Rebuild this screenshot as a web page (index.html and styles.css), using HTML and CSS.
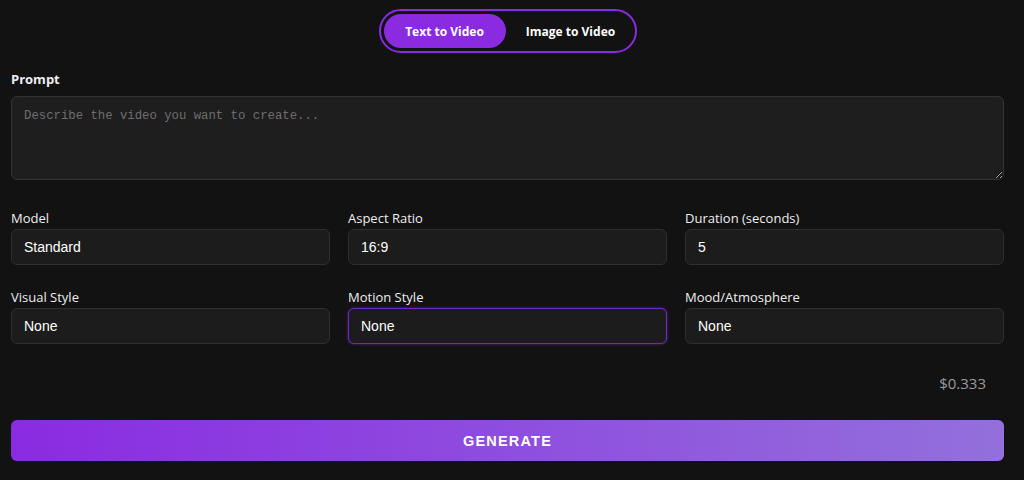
FILE: index.html
```html
<!DOCTYPE html>
<html lang="en">
<head>
  <meta charset="UTF-8">
  <meta name="viewport" content="width=device-width, initial-scale=1.0">
  <title>Video Generator</title>
  <link rel="stylesheet" href="styles.css">
</head>
<body>
  <div class="app">
    <div class="mode-row">
      <div class="mode-toggle">
        <button class="mode-btn active">Text to Video</button>
        <button class="mode-btn">Image to Video</button>
      </div>
    </div>

    <label class="prompt-label" for="prompt">Prompt</label>
    <textarea id="prompt" class="prompt" placeholder="Describe the video you want to create..."></textarea>

    <div class="options">
      <div class="field">
        <label>Model</label>
        <input type="text" value="Standard">
      </div>
      <div class="field">
        <label>Aspect Ratio</label>
        <input type="text" value="16:9">
      </div>
      <div class="field">
        <label>Duration (seconds)</label>
        <input type="text" value="5">
      </div>
      <div class="field">
        <label>Visual Style</label>
        <input type="text" value="None">
      </div>
      <div class="field">
        <label>Motion Style</label>
        <input type="text" class="focused" value="None">
      </div>
      <div class="field">
        <label>Mood/Atmosphere</label>
        <input type="text" value="None">
      </div>
    </div>

    <div class="price">$0.333</div>

    <button class="generate">GENERATE</button>
  </div>
</body>
</html>
```

FILE: styles.css
```css
body {
  margin: 0;
  padding: 0;
  background-color: #121212;
  color: #eee;
  font-family: 'Open Sans', 'Noto Sans', sans-serif;
}
.app {
  padding: 9px 20px 0 11px;
}
.mode-row {
  display: flex;
  justify-content: center;
}
.mode-toggle {
  display: inline-flex;
  padding: 3px;
  border: 2px solid #8a2be2;
  border-radius: 999px;
}
.mode-btn {
  height: 34px;
  padding: 0 0 0 4px;
  border: none;
  border-radius: 999px;
  background: transparent;
  color: #fff;
  font-family: 'Open Sans', sans-serif;
  font-size: 12px;
  font-weight: 700;
  cursor: pointer;
  width: 126px;
}
.mode-btn.active {
  width: 122px;
  padding: 0;
  background-color: #8a2be2;
}
.prompt-label {
  display: block;
  margin-top: 18px;
  font-size: 13px;
  font-weight: 700;
  line-height: 17px;
}
.prompt {
  display: block;
  box-sizing: border-box;
  width: 100%;
  height: 84px;
  margin-top: 8px;
  padding: 12px;
  background-color: #1e1e1e;
  border: 1px solid #333;
  border-radius: 6px;
  color: #ddd;
  font-family: 'Liberation Mono', monospace;
  font-size: 12.3px;
  outline: none;
}
.prompt::placeholder {
  color: #6e6e6e;
}
.options {
  display: grid;
  grid-template-columns: repeat(3, 1fr);
  column-gap: 18px;
  row-gap: 24px;
  margin-top: 30px;
}
.field label {
  display: block;
  font-size: 13px;
  line-height: 17px;
  margin-bottom: 2px;
  color: #eee;
}
.field input {
  display: block;
  box-sizing: border-box;
  width: 100%;
  height: 36px;
  padding: 0 12px;
  background-color: #1c1c1c;
  border: 1px solid #2f2f2f;
  border-radius: 6px;
  color: #fff;
  font-family: 'Liberation Sans', Arial, sans-serif;
  font-size: 14px;
  outline: none;
}
.field input.focused {
  border-color: #7028c4;
  box-shadow: 0 0 3px rgba(138, 43, 226, 0.6);
}
.price {
  margin-top: 30px;
  padding-right: 18px;
  text-align: right;
  font-size: 15px;
  line-height: 19px;
  color: #9a9a9a;
}
.generate {
  display: block;
  width: 100%;
  height: 41px;
  margin-top: 27px;
  border: none;
  border-radius: 6px;
  background: linear-gradient(90deg, #8a2be2, #9370db);
  color: #fff;
  font-family: 'Liberation Sans', Arial, sans-serif;
  font-size: 14.5px;
  font-weight: 700;
  letter-spacing: 1.2px;
  cursor: pointer;
}
```
